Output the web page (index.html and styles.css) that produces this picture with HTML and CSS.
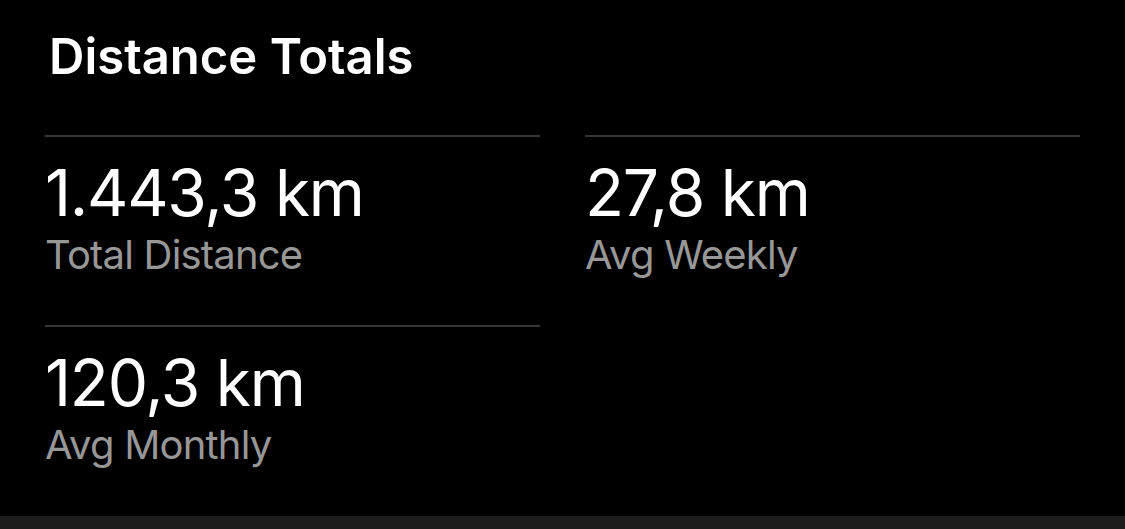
FILE: index.html
```html
<!DOCTYPE html>
<html>
<head>
    <meta charset="utf-8" />
    <title>Distance Totals</title>
    <link rel="stylesheet" href="styles.css">
</head>
<body>
<div class="card">
    <h1 class="title">Distance Totals</h1>
    <div class="stats">
        <div class="stat">
            <p class="value">1.443,3 km</p>
            <p class="label">Total Distance</p>
        </div>
        <div class="stat">
            <p class="value">27,8 km</p>
            <p class="label">Avg Weekly</p>
        </div>
        <div class="stat">
            <p class="value">120,3 km</p>
            <p class="label">Avg Monthly</p>
        </div>
    </div>
</div>
</body>
</html>
```

FILE: styles.css
```css
* {
    margin: 0;
    padding: 0;
}
body {
    background: #1c1c1c;
    font-family: Inter, "Noto Sans", sans-serif;
}
/* 黑色卡片，底部露出一条深灰 */
.card {
    box-sizing: border-box;
    min-height: 516px;
    padding: 28px 45px 0;
    background: #000;
}
.title {
    margin-left: 4px;
    font-size: 49px;
    line-height: 58px;
    font-weight: 600;
    color: #fff;
    letter-spacing: 0;
}
.stats {
    display: grid;
    grid-template-columns: 1fr 1fr;
    column-gap: 45px;
    margin-top: 49px;
}
.stat {
    border-top: 2px solid #363636;
    padding: 20px 0 46px;
}
.stat .value {
    font-size: 64px;
    line-height: 72px;
    font-weight: 400;
    color: #fff;
    letter-spacing: -1.2px;
}
.stat .label {
    margin-top: 2px;
    font-size: 40px;
    line-height: 48px;
    color: #979797;
    letter-spacing: -0.8px;
}
```
